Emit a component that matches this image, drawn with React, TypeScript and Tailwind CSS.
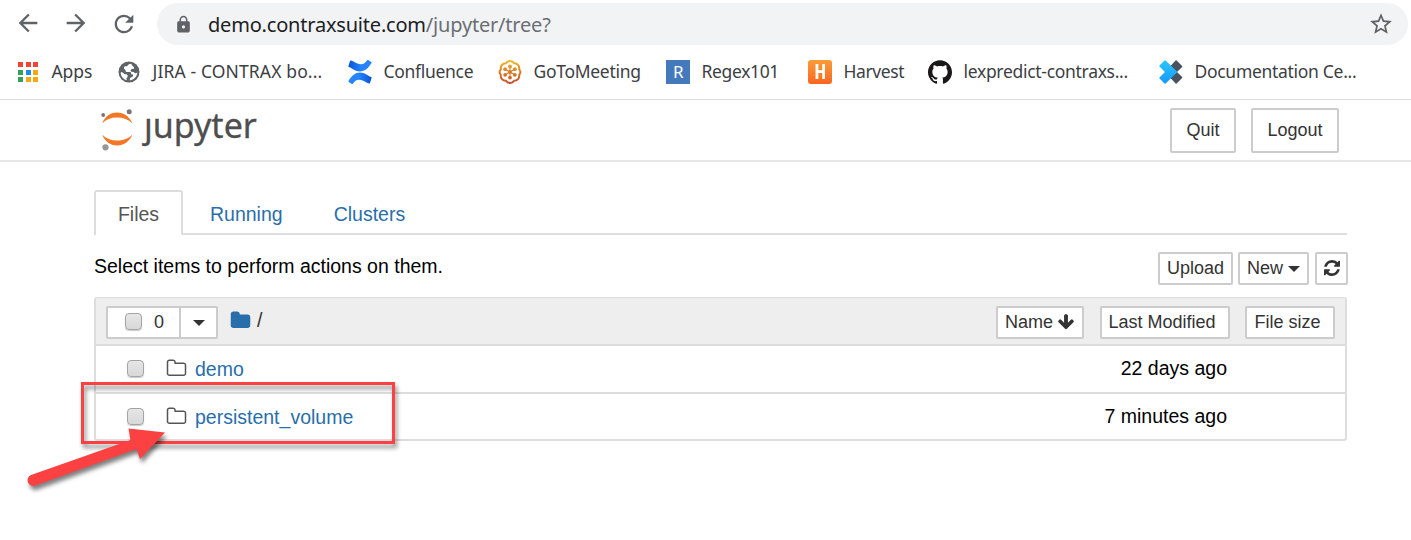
import React from "react";
import { MdArrowBack, MdArrowForward, MdRefresh, MdLock, MdStarBorder } from "react-icons/md";
import { SiGithub } from "react-icons/si";

const FOLDER =
  "M1728 608v704q0 92-66 158t-158 66h-1216q-92 0-158-66t-66-158v-960q0-92 66-158t158-66h320q92 0 158 66t66 158v32h672q92 0 158 66t66 158z";
const FOLDER_O =
  "M1600 1312v-704q0-40-28-68t-68-28h-704q-40 0-68-28t-28-68v-64q0-40-28-68t-68-28h-320q-40 0-68 28t-28 68v960q0 40 28 68t68 28h1216q40 0 68-28t28-68zm128-704v704q0 92-66 158t-158 66h-1216q-92 0-158-66t-66-158v-960q0-92 66-158t158-66h320q92 0 158 66t66 158v32h672q92 0 158 66t66 158z";
const ARROW_DOWN =
  "M1675 832q0 53-37 90l-651 652q-39 37-91 37-53 0-90-37l-651-652q-38-36-38-90 0-53 38-91l74-75q39-37 91-37 53 0 90 37l294 294v-704q0-52 38-90t90-38h128q52 0 90 38t38 90v704l294-294q37-37 90-37 52 0 91 37l75 75q37 39 37 91z";
const REFRESH =
  "M1511 928q0 5-1 7-64 268-268 434.5t-478 166.5q-146 0-282.5-55t-243.5-157l-129 129q-19 19-45 19t-45-19-19-45v-448q0-26 19-45t45-19h448q26 0 45 19t19 45-19 45l-137 137q71 66 161 102t187 36q134 0 250-65t186-179q11-17 53-117 8-23 30-23h192q13 0 22.5 9.5t9.5 22.5zm25-800v448q0 26-19 45t-45 19h-448q-26 0-45-19t-19-45 19-45l138-138q-148-137-349-137-134 0-250 65t-186 179q-11 17-53 117-8 23-30 23h-199q-13 0-22.5-9.5t-9.5-22.5v-7q65-268 270-434.5t480-166.5q146 0 284 55.5t245 156.5l130-129q19-19 45-19t45 19 19 45z";

function AppsIcon() {
  const colors = ["#f44336", "#f44336", "#f44336", "#34a05a", "#1e88f5", "#f9a80a", "#34a05a", "#f9a80a", "#f9a80a"];
  return (
    <span className="grid grid-cols-3 gap-[2.5px]">
      {colors.map((c, i) => (
        <span key={i} className="size-[5px]" style={{ background: c }} />
      ))}
    </span>
  );
}

function GlobeIcon() {
  return (
    <svg viewBox="0 0 22 22" className="size-[22px]">
      <circle cx="11" cy="11" r="10.5" fill="#5f6368" />
      <path
        d="M13.200 2.800c-2 .2-3.400 1-4 2.400H7.600c-1 0-1.600.7-1.600 1.700 0 .8.5 1.400 1.300 1.600l.2 1.300c.2.8.8 1.200 1.600 1.200h2.600c1 0 1.300.5 1.300 1.300 0 .9.6 1.300 1.500 1.300h.6c.2 1.300-.3 2.300-1.600 2.600-1.200.3-1.700 1-1.700 2.100v1.100c4-.4 7.300-3.800 7.600-7.900-.5.6-1.200.9-2 .8-.7-.1-1-.6-1.500-1-.6-.5-1.600-.3-2.400-.5-.8-.2-1-.9-.8-1.600.3-1 1.200-1 2.100-1.100 1-.1 1.300-.8 1.200-1.600-.1-.9-.9-1.100-1.400-1.600-.5-.5-.7-1.300-1.400-2.100zM2.700 11.300c-.1 3.900 2.400 7 5.900 7.900.3-.9.1-1.600-.4-2 .9-.4 1.500-1.100 1.500-2.100 0-1.200-.9-1.800-2-1.800-1 0-1.700-.4-2.100-1.100-.5-.8-1.500-1.100-2.900-.9z"
        fill="#fff"
      />
    </svg>
  );
}

function ConfluenceIcon() {
  const ribbon = "M3.100.5c-.5-.2-.9 0-1.100.5L.4 5.900c-.2.500 0 .9.500 1.100 3.600 1.500 6.600 4.600 11.200 4.500 4.700-.1 7.900-2.900 11.300-8.200.3-.5.200-.9-.3-1.200L20.200.1c-.5-.3-.9-.1-1.200.3-1.700 2.400-3.600 4-6.400 3.800C9 3.900 6.500 1.700 3.100.5z";
  return (
    <svg viewBox="0 0 24 24" className="size-6">
      <defs>
        <linearGradient id="ribbon" x1="0" y1="0" x2="1" y2="0">
          <stop offset="0" stopColor="#0854d0" />
          <stop offset=".55" stopColor="#2684ff" />
        </linearGradient>
      </defs>
      <path d={ribbon} fill="url(#ribbon)" />
      <path d={ribbon} fill="url(#ribbon)" transform="rotate(180 12 12)" />
    </svg>
  );
}

function MeetingIcon() {
  const a = [0, 60, 120, 180, 240, 300];
  return (
    <svg viewBox="0 0 24 24" className="size-6">
      <defs>
        <linearGradient id="gtm" gradientUnits="userSpaceOnUse" x1="0" y1="0" x2="0" y2="24">
          <stop offset="0" stopColor="#eebb22" />
          <stop offset=".5" stopColor="#dc7d28" />
          <stop offset="1" stopColor="#c84a2a" />
        </linearGradient>
      </defs>
      <path
        d="M7.900 3.200C9.600.4 14.400.4 16.100 3.200C19.400 3.200 21.700 5.900 21.200 9.300Q23.600 12 21.200 14.700C21.700 18.100 19.400 20.800 16.100 20.800C14.400 23.600 9.600 23.600 7.900 20.800C4.600 20.800 2.300 18.100 2.800 14.700Q.4 12 2.800 9.300C2.300 5.900 4.600 3.200 7.900 3.200z"
        fill="none"
        stroke="url(#gtm)"
        strokeWidth="2"
      />
      <circle cx="12" cy="12" r="2" fill="url(#gtm)" />
      {a.map((d) => {
        const s = Math.sin((d * Math.PI) / 180);
        const c = Math.cos((d * Math.PI) / 180);
        return (
          <g key={d}>
            <path d={`M12 12L${12 + 5.5 * s} ${12 - 5.5 * c}`} stroke="#dc7d28" strokeWidth="1.100" />
            <circle cx={12 + 5.6 * s} cy={12 - 5.6 * c} r="1.900" fill="url(#gtm)" />
          </g>
        );
      })}
    </svg>
  );
}

function DocsIcon() {
  return (
    <svg viewBox="0 0 24 24" className="size-6">
      <defs>
        <linearGradient id="docs" x1="0" y1="0" x2="0" y2="1">
          <stop offset="0" stopColor="#2cc8fb" />
          <stop offset="1" stopColor="#1597ff" />
        </linearGradient>
      </defs>
      <path d="M17.600.5l5.500 5.500q.5.500 0 1L18 12l5.100 5q.5.500 0 1l-5.500 5.500q-.5.400-1 0L11 17.500V6.500L16.600.5q.5-.4 1 0z" fill="#48535f" />
      <path d="M6.600.5L17.900 11.500q.5.500 0 1L6.600 23.500q-.5.400-1 0L.5 18.400q-.5-.5 0-1L5.900 12 .5 6.600q-.5-.5 0-1L5.600.5q.5-.4 1 0z" fill="url(#docs)" />
    </svg>
  );
}

function HarvestIcon() {
  return (
    <span className="flex size-6 items-center justify-center rounded-[3px] bg-linear-to-b from-[#fb9b37] to-[#f9651f] font-['Roboto',sans-serif] text-[21px] font-black text-white">
      <span className="scale-x-[0.75]">H</span>
    </span>
  );
}

function Bookmark({ icon, label, className }: { icon: React.ReactNode; label: string; className: string }) {
  return (
    <div className={`flex shrink-0 items-center whitespace-nowrap ${className}`}>
      <span className="flex w-6 shrink-0 justify-center">{icon}</span>
      <span className="ml-[11.5px] pb-[2px]">{label}</span>
    </div>
  );
}

function Fa({ d, className, box = "0 0 1792 1792" }: { d: string; className: string; box?: string }) {
  return (
    <svg viewBox={box} className={`shrink-0 fill-current ${className}`}>
      <path d={d} />
    </svg>
  );
}

function Caret() {
  return <span className="mt-[2px] border-x-[6px] border-t-[6px] border-x-transparent border-t-[#333]" />;
}

function Button({ className, children }: { className: string; children: React.ReactNode }) {
  return (
    <button className={`flex shrink-0 items-center rounded-[2px] border-2 border-[#ccc] bg-white pb-[2px] text-[18px] whitespace-nowrap text-[#333] ${className}`}>
      {children}
    </button>
  );
}

function Check() {
  return <span className="size-[17px] shrink-0 rounded-[4px] border-[1.5px] border-[#a4a4a4] bg-linear-to-b from-[#e6e6e6] to-[#d8d8d8] shadow-[0_1px_1px_#00000033]" />;
}

function Row({ name, time, last }: { name: string; time: string; last?: boolean }) {
  return (
    <div className={`flex items-center border-t-2 border-[#ddd] pl-[31px] ${last ? "h-[47px] pb-[1px]" : "h-[48px] pb-[2px]"}`}>
      <Check />
      <Fa d={FOLDER_O} className="ml-[22px] size-[21px] text-[#555]" />
      <a className="ml-[8px] pt-[2px] text-[#296eaa]">{name}</a>
      <span className="mr-[118px] ml-auto text-black">{time}</span>
    </div>
  );
}

export default function App() {
  return (
    <div className="relative h-[540px] w-[1411px] overflow-hidden bg-white font-['Liberation_Sans',Arial,sans-serif] text-[19.5px] leading-[28px]">
      <div className="h-[100px] border-b border-[#dadce0] font-['Noto_Sans','Open_Sans',sans-serif]">
        <div className="flex h-[45px] items-center pt-[3px] pr-[3px] text-[#5f6368]">
          <MdArrowBack className="mb-[2px] ml-[14px] size-[28px]" />
          <MdArrowForward className="mb-[2px] ml-[20px] size-[28px]" />
          <MdRefresh className="mb-[1px] ml-[20px] size-[28px]" />
          <div className="ml-[19px] flex h-[42px] flex-1 items-center rounded-full bg-[#f1f3f4] pr-[14px]">
            <MdLock className="ml-[17px] size-[19px]" />
            <span className="ml-[15px] pt-[1px] text-[20px] tracking-[-0.2px] text-[#202124]">
              demo.contraxsuite.com<span className="text-[#6b6f74]">/jupyter/tree?</span>
            </span>
            <MdStarBorder className="ml-auto size-[26px]" />
          </div>
        </div>
        <div className="flex h-[54px] items-center pl-[16px] text-[17.500px] text-[#3c4043]">
          <Bookmark className="w-[101px] tracking-[-0.1px]" icon={<AppsIcon />} label="Apps" />
          <Bookmark className="w-[231px] tracking-[0.13px]" icon={<GlobeIcon />} label="JIRA - CONTRAX bo..." />
          <Bookmark className="w-[150px] tracking-[-0.3px]" icon={<ConfluenceIcon />} label="Confluence" />
          <Bookmark className="w-[168px] tracking-[-0.3px]" icon={<MeetingIcon />} label="GoToMeeting" />
          <Bookmark
            className="w-[142px] tracking-[-0.35px]"
            icon={<span className="flex size-6 items-center justify-center bg-[#4479bb] text-[17px] text-white">R</span>}
            label="Regex101"
          />
          <Bookmark className="w-[120px] tracking-[-0.4px]" icon={<HarvestIcon />} label="Harvest" />
          <Bookmark className="w-[231px] tracking-[-0.3px]" icon={<SiGithub className="size-6 text-[#191717]" />} label="lexpredict-contraxs..." />
          <Bookmark className="tracking-[-0.3px]" icon={<DocsIcon />} label="Documentation Ce..." />
        </div>
      </div>

      <header className="flex h-[62px] items-start border-b-2 border-[#e7e7e7] pr-[72px] pl-[100px]">
        <svg viewBox="0 0 34 44" className="mt-[8px] h-[44px] w-[34px]">
          <path d="M2.300 15.200C5 8.500 10.500 4.500 17 4.500s12.500 4 15.300 10.700C28.500 11.500 23 9.600 17 9.600S6 11.500 2.300 15.200z" fill="#f37726" />
          <path d="M2.300 26.700C6 30.500 11 32.600 17 32.600s11.500-2.100 15.300-5.900C29.500 33.500 24 37.400 17 37.400S5 33.500 2.300 26.700z" fill="#f37726" />
          <circle cx="3.200" cy="7" r="1.900" fill="#767677" />
          <circle cx="29.200" cy="3.700" r="2.500" fill="#767677" />
          <circle cx="5.500" cy="39.300" r="3.100" fill="#969696" />
        </svg>
        <span className="mt-[3px] ml-[10px] font-['Noto_Sans','Open_Sans',sans-serif] text-[34px] leading-[44px] text-[#4e4e4e] [-webkit-text-stroke:0.3px_#4e4e4e]">
          ȷupyter
        </span>
        <Button className="mt-[8px] ml-auto h-[45px] w-[66px] justify-center">Quit</Button>
        <Button className="mt-[8px] ml-[15px] h-[45px] w-[88px] justify-center">Logout</Button>
      </header>

      <main className="mr-[64px] ml-[94px] pt-[28px]">
        <nav className="flex h-[45px] border-b-2 border-[#ddd] text-[#296eaa]">
          <a className="-mb-[2px] h-[45px] w-[89px] rounded-t-[3px] border-2 border-b-0 border-[#ddd] bg-white pt-[8px] text-center text-[#555]">Files</a>
          <a className="pt-[10px] pl-[27px]">Running</a>
          <a className="pt-[10px] pl-[51px]">Clusters</a>
        </nav>
        <div className="flex h-[62px] items-start pt-[17px]">
          <span className="text-black">Select items to perform actions on them.</span>
          <Button className="ml-auto h-[33px] w-[75px] justify-center">Upload</Button>
          <Button className="ml-[5px] h-[33px] w-[71px] gap-[5px] pl-[7px]">
            New <Caret />
          </Button>
          <Button className="-mr-[1px] ml-[6px] h-[33px] w-[33px] justify-center">
            <Fa d={REFRESH} box="0 0 1536 1536" className="size-[16px]" />
          </Button>
        </div>
        <section className="h-[144px] rounded-[3px] border-2 border-t-[1px] border-[#ddd]">
          <div className="flex h-[46px] items-center bg-[#eee] pt-[3px] pl-[10px]">
            <Button className="h-[33px] w-[75px] rounded-r-none pl-[17px]">
              <Check />
              <span className="ml-[12px]">0</span>
            </Button>
            <Button className="-ml-[2px] h-[33px] w-[39px] justify-center rounded-l-none">
              <Caret />
            </Button>
            <Fa d={FOLDER} className="mb-[5px] ml-[12px] size-[21px] text-[#296eaa]" />
            <span className="mb-[5px] ml-[6px] text-[#333]">/</span>
            <Button className="ml-auto h-[33px] w-[88px] gap-[4px] pl-[7px]">
              Name <Fa d={ARROW_DOWN} className="size-[18px]" />
            </Button>
            <Button className="ml-[16px] h-[33px] w-[130px] pl-[6.5px]">Last Modified</Button>
            <Button className="mr-[10px] ml-[15px] h-[33px] w-[90px] pl-[7.5px]">File size</Button>
          </div>
          <Row name="demo" time="22 days ago" />
          <Row name="persistent_volume" time="7 minutes ago" last />
        </section>
      </main>

      <div className="absolute top-[382px] left-[81px] h-[62px] w-[314px] border-[3px] border-[#fb4141] drop-shadow-[2px_4px_2px_rgba(0,0,0,0.45)]" />
      <svg viewBox="0 0 200 140" className="absolute top-[370px] left-[10px] h-[140px] w-[200px] drop-shadow-[2px_4px_2px_rgba(0,0,0,0.5)]">
        <path d="M21 105L120.500 70 118.500 58.500 155 62.500 130 89 126.500 79 25.500 115.500A5.500 5.500 0 0 1 21 105z" fill="#fb4141" />
      </svg>
    </div>
  );
}
